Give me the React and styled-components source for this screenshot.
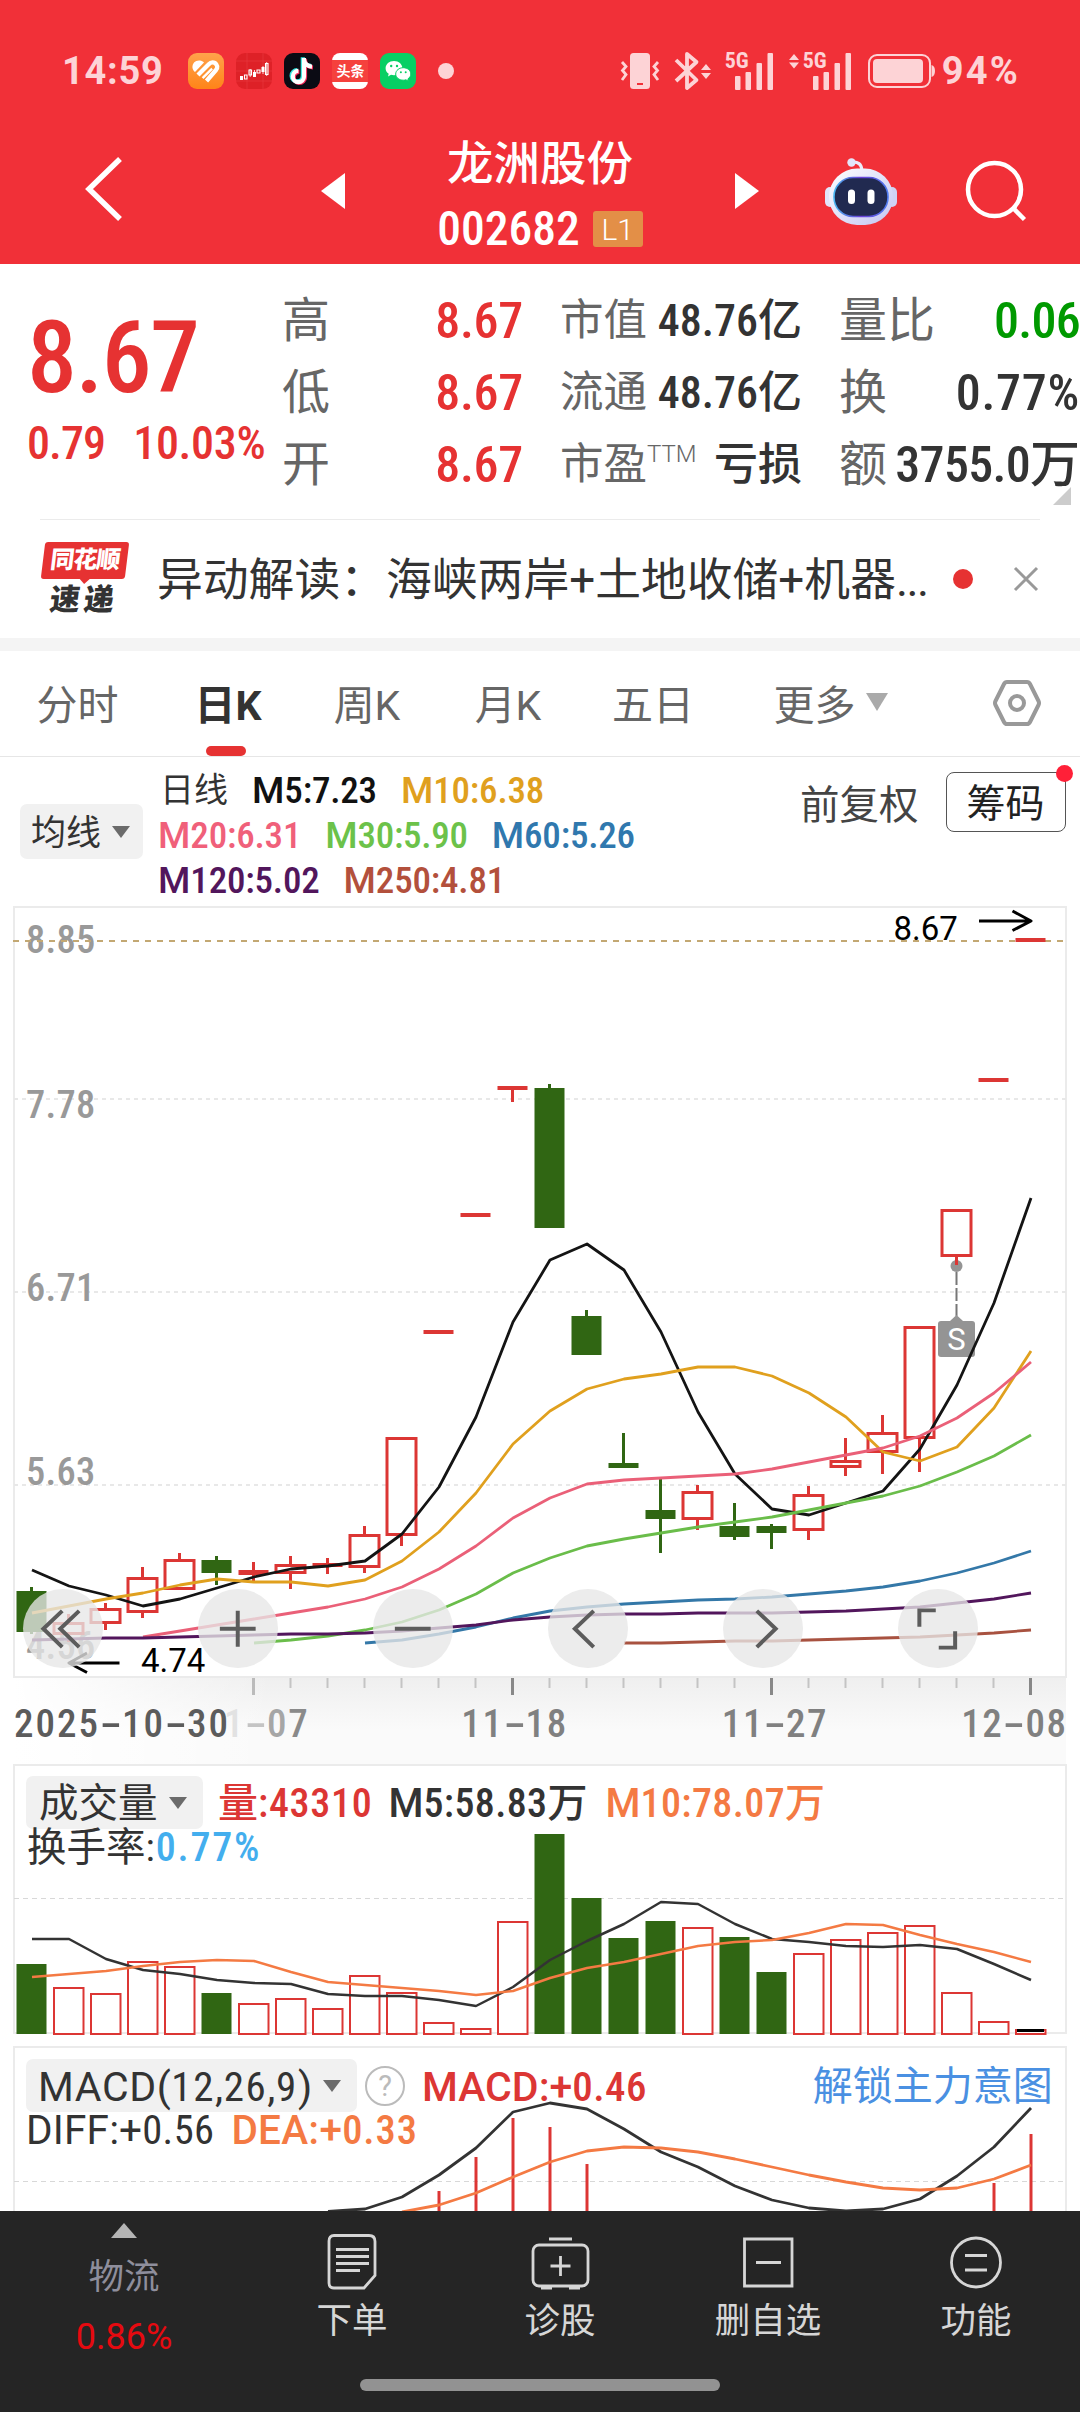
import React from 'react'
import styled, { createGlobalStyle, css } from 'styled-components'

const GlobalStyle = createGlobalStyle`
  * { box-sizing: border-box; }
  body {
    margin: 0;
    background: #fff;
    font-family: Roboto, "Noto Sans CJK SC", sans-serif;
    color: #333;
  }
  svg { display: block; overflow: visible; }
`

const digits = css`
  font-family: "Roboto Condensed", Roboto, "Noto Sans CJK SC", sans-serif;
  font-stretch: condensed;
`

const Screen = styled.div`
  width: 1080px;
  height: 2412px;
  overflow: hidden;
  display: flex;
  flex-direction: column;
`

/* ---------- shared text ---------- */

const Text = styled.span`
  display: inline-block;
  white-space: pre;
  line-height: 1;
  padding-top: 3px;
  font-size: ${p => p.$size}px;
  font-weight: ${p => p.$weight || 400};
  color: ${p => p.$color || '#333'};
  letter-spacing: ${p => p.$track || 0}px;
`
const Digits = styled.span`
  ${digits}
  letter-spacing: ${p => p.$track || 0}px;
`

// digits are set in the narrow face, words keep the normal one
const Figure = ({ children, track, ...rest }) => (
  <Text {...rest}>
    {String(children).split(/([\d.:%]+)/).map((part, i) =>
      i % 2 ? <Digits key={i} $track={track}>{part}</Digits> : part
    )}
  </Text>
)

const Caret = styled.i`
  width: 0;
  height: 0;
  border-left: ${p => p.$w / 2}px solid transparent;
  border-right: ${p => p.$w / 2}px solid transparent;
  border-top: ${p => p.$h}px solid ${p => p.$color};
  margin-left: ${p => p.$gap}px;
`

/* ---------- status bar ---------- */

const Header = styled.header`
  height: 264px;
  background: #f13038;
  flex: none;
`
const StatusBar = styled.div`
  height: 142px;
  padding: 0 60px 0 62px;
  display: flex;
  align-items: center;
  color: #fdd3d6;
`
const Apps = styled.div`
  display: flex;
  gap: 12px;
  margin-left: 25px;
`
const Dot = styled.i`
  width: ${p => p.$d}px;
  height: ${p => p.$d}px;
  border-radius: 50%;
  background: ${p => p.$color};
  flex: none;
`
const StatusRight = styled.div`
  margin-left: auto;
  display: flex;
  align-items: center;
`
const StatusText = styled.span`
  font-size: 38px;
  font-weight: 700;
  letter-spacing: ${p => p.$track}px;
`
const ToutiaoText = styled.span`
  width: 36px;
  height: 36px;
  border-radius: 8px;
  background: linear-gradient(#fff 19%, #f5413d 20%, #f5413d 80%, #fff 81%);
  color: #fff;
  font-size: 14px;
  font-weight: 700;
  line-height: 36px;
  text-align: center;
`

const HeartApp = () => (
  <svg width="36" height="36" viewBox="0 0 36 36">
    <defs>
      <linearGradient id="heart" x1="0" y1="0" x2="0" y2="1">
        <stop offset="0" stopColor="#ffa24b" />
        <stop offset="1" stopColor="#ff8418" />
      </linearGradient>
    </defs>
    <rect width="36" height="36" rx="9" fill="url(#heart)" />
    <path d="M4.500 15c-.6-5 3-8 7.500-7.500 1.500.2 3 1 4 2L7 19c-1.300-1-2.200-2.500-2.500-4z" fill="#fff" />
    <path d="M10 22L20.500 11.500q3-3.200 6.500-1.500 4 3 1 7L18.500 28" stroke="#fff" strokeWidth="4.300" fill="none" strokeLinejoin="round" />
    <path d="M14.500 25L24 15.500" stroke="#fff" strokeWidth="2.600" />
    <path d="M12.600 24.200L23.200 13.600" stroke="#ff9534" strokeWidth="1.500" />
  </svg>
)

const StockApp = () => (
  <svg width="36" height="36" viewBox="0 0 36 36">
    <rect width="36" height="36" rx="9" fill="#de2127" />
    <path d="M11 0v36M27 0v36M0 8h36M0 18h36M0 28h36" stroke="#e8383c" strokeWidth=".7" />
    <path d="M4 23h3v4H4zM17 19h3v5h-3zM25.500 14h3v5h-3z" fill="#fff" />
    <path d="M8.500 22h2.500v4H8.500zM13 17h2.500v5H13zM21 17h3v3h-3zM29.500 10.500h2.500v11h-2.500z" fill="none" stroke="#fff" strokeWidth="1.100" />
    <path d="M18.500 17v2M27 13v8M30.700 9v14M14.200 16v8" stroke="#fff" strokeWidth=".8" />
  </svg>
)

const TikTokApp = () => {
  const note = 'M20 5v18.500a5.600 5.600 0 1 1-5.600-5.600M20 7c.8 4 3.600 6.300 8 6.600'
  return (
    <svg width="36" height="36" viewBox="0 0 36 36">
      <rect width="36" height="36" rx="9" fill="#0b0b14" />
      <g fill="none" strokeWidth="4.200">
        <path d={note} stroke="#32e5e0" transform="translate(-1.200 -.8)" />
        <path d={note} stroke="#f7295a" transform="translate(1 .9)" />
        <path d={note} stroke="#fff" />
      </g>
    </svg>
  )
}

const WeChatApp = () => (
  <svg width="36" height="36" viewBox="0 0 36 36">
    <rect width="36" height="36" rx="9" fill="#07cf64" />
    <path d="M14 8c-4.800 0-8.400 3.200-8.400 7.200 0 2.300 1.200 4.300 3.100 5.600L8 23.400l3-1.600c1 .3 2 .4 3 .4 4.800 0 8.400-3 8.400-7S18.800 8 14 8z" fill="#fff" />
    <path d="M23.300 14.700c-4.200 0-7.600 2.800-7.600 6.300s3.400 6.200 7.600 6.200c.9 0 1.800-.1 2.600-.4l2.600 1.400-.6-2.300c1.800-1.200 2.900-2.900 2.900-4.900 0-3.500-3.300-6.300-7.500-6.300z" fill="#fff" stroke="#07cf64" strokeWidth="1" />
    <g fill="#07cf64">
      <circle cx="11.200" cy="13" r="1.200" /><circle cx="17" cy="13" r="1.200" />
      <circle cx="20.900" cy="19.300" r="1" /><circle cx="25.700" cy="19.300" r="1" />
    </g>
  </svg>
)

const Vibrate = () => (
  <svg width="38" height="36" viewBox="0 0 38 36" fill="none">
    <rect x="9" width="20" height="36" rx="3.500" fill="currentColor" />
    <path d="M16 31h6" stroke="#f13038" strokeWidth="2" />
    <path d="M1 9l4 4.500-3.500 4 3.500 4L1 27M37 9l-4 4.500 3.500 4-3.500 4L37 27" stroke="currentColor" strokeWidth="2.800" />
  </svg>
)

const Bluetooth = () => (
  <svg width="36" height="38" viewBox="0 0 36 38" fill="none">
    <path d="M1 8l20.500 20L12 36V2l9.500 8L1 29" stroke="currentColor" strokeWidth="3.800" strokeLinejoin="round" />
    <path d="M26 18l5-6 5 6zM26 21l5 6 5-6z" fill="currentColor" />
  </svg>
)

const SignalBox = styled.div`
  display: flex;
  align-items: flex-start;
  position: relative;
  width: 48px;
  height: 37px;
  margin-left: ${p => p.$gap}px;
`
const SignalLabel = styled.span`
  ${digits}
  font-size: 22px;
  font-weight: 700;
  line-height: 16px;
  position: absolute;
  left: 0;
  top: 0;
`
const Signal = ({ gap, arrows }) => (
  <SignalBox $gap={gap}>
    <SignalLabel>5G</SignalLabel>
    <svg width="48" height="37" viewBox="0 0 48 37" fill="currentColor">
      {arrows && <path d="M-14 7l5-6 5 6zM-14 9.500l5 6 5-6z" />}
      <rect x="10" y="23" width="5.500" height="14" rx="1" />
      <rect x="20.500" y="19" width="5.500" height="18" rx="1" />
      <rect x="31.500" y="10" width="5.500" height="27" rx="1" />
      <rect x="42.500" y="0" width="5.500" height="37" rx="1" />
    </svg>
  </SignalBox>
)

const Battery = () => (
  <svg width="67" height="34" viewBox="0 0 67 34" fill="none">
    <rect x="1" y="1" width="61" height="32" rx="8" stroke="currentColor" strokeWidth="2" />
    <rect x="5" y="5" width="50" height="24" rx="4" fill="currentColor" />
    <path d="M63.500 11q3.500 1 3.500 6t-3.500 6z" fill="currentColor" />
  </svg>
)
const Space = styled.i`
  width: ${p => p.$w}px;
  flex: none;
`

/* ---------- navigation ---------- */

const NavBar = styled.nav`
  height: 98px;
  display: grid;
  grid-template-columns: 321px 84px 270px 110px 140px 155px;
  grid-template-rows: 98px;
  align-items: center;
  color: #fff;
`
const NavCell = styled.div`
  padding-left: ${p => p.$pad || 0}px;
`
const Title = styled.div`
  display: flex;
  flex-direction: column;
  align-items: center;
  margin-top: 10px;
`
const CodeRow = styled.div`
  display: flex;
  align-items: center;
  gap: 13px;
  margin-top: 16px;
`
const Code = styled(Digits)`
  font-size: 47.500px;
  font-weight: 500;
  line-height: 50px;
`
const LevelBadge = styled.span`
  width: 50px;
  height: 36px;
  border-radius: 3px;
  background: #e38f47;
  color: #fff;
  font-size: 30px;
  font-weight: 300;
  line-height: 37px;
  text-align: center;
`

const Robot = () => (
  <svg width="72" height="67" viewBox="0 0 72 67">
    <defs>
      <linearGradient id="helmet" x1="0" y1="0" x2="1" y2="1">
        <stop offset="0" stopColor="#fff" />
        <stop offset="1" stopColor="#c3c5f2" />
      </linearGradient>
      <linearGradient id="visor" x1="0" y1="0" x2="1" y2="0">
        <stop offset="0" stopColor="#4ab6f0" />
        <stop offset=".5" stopColor="#6a3fd8" />
        <stop offset="1" stopColor="#4f7cf0" />
      </linearGradient>
    </defs>
    <path d="M27 4q9-1 10 8" stroke="#ecebfa" strokeWidth="3" fill="none" />
    <circle cx="26.500" cy="4.500" r="4.200" fill="#e3e5fa" />
    <rect x="0" y="29" width="10" height="20" rx="5" fill="#e2e4fa" />
    <rect x="62" y="29" width="10" height="20" rx="5" fill="#cfd2f4" />
    <rect x="4" y="10.500" width="64" height="56.500" rx="28" fill="url(#helmet)" />
    <rect x="9" y="19.500" width="54" height="39" rx="19" fill="#212a50" stroke="url(#visor)" strokeWidth="1.600" />
    <rect x="23" y="31.500" width="7" height="14.500" rx="3.500" fill="#fff" />
    <rect x="42.500" y="31.500" width="7" height="14.500" rx="3.500" fill="#fff" />
  </svg>
)

/* ---------- quote ---------- */

const Quote = styled.section`
  height: 255px;
  display: flex;
  padding-top: 19px;
  position: relative;
`
const PriceBlock = styled.div`
  width: 282px;
  padding-left: 27px;
  padding-top: 22px;
`
const Changes = styled.div`
  display: flex;
  gap: 28px;
  margin-top: 9px;
`
const Stats = styled.div`
  display: grid;
  grid-template-columns: 241px 242px 241px;
  grid-auto-rows: 72px;
  column-gap: 37px;
  height: 216px;
`
const Stat = styled.div`
  display: flex;
  justify-content: space-between;
  align-items: center;
`
const Sup = styled.sup`
  font-size: 24px;
  font-weight: 300;
  vertical-align: 17px;
  line-height: 0;
`
const Corner = styled.i`
  position: absolute;
  right: 9px;
  top: 223px;
  border-left: 18px solid transparent;
  border-bottom: 18px solid #ccc;
`

const RED = '#e63232'
const stats = [
  ['高', '8.67', '市值', '48.76亿', '量比', '0.06'],
  ['低', '8.67', '流通', '48.76亿', '换', '0.77%'],
  ['开', '8.67', '市盈', '亏损', '额', '3755.0万'],
]

/* ---------- news strip ---------- */

const News = styled.section`
  height: 119px;
  margin: 0 40px;
  border-top: 1px solid #ebebeb;
  display: flex;
  align-items: center;
`
const Logo = styled.div`
  width: 90px;
  height: 74px;
  margin-left: 1px;
`
const LogoTop = styled.div`
  height: 37px;
  width: 84px;
  margin-left: 2px;
  border-radius: 3px;
  background: ${RED};
  transform: skewX(-7deg);
  color: #fff;
  font-size: 24px;
  font-weight: 900;
  line-height: 36px;
  text-align: center;
  letter-spacing: -1px;
  position: relative;
  &::after {
    content: '';
    position: absolute;
    left: 38px;
    top: 36px;
    border: 6px solid transparent;
    border-top-color: ${RED};
    border-bottom: 0;
  }
`
const LogoBottom = styled.div`
  margin: 6px 0 0 9px;
  font-size: 30px;
  font-weight: 900;
  line-height: 30px;
  letter-spacing: 4px;
  transform: skewX(-7deg);
`
const Headline = styled(Text)`
  padding-top: 5px;
`
const Ellipsis = styled.span`
  letter-spacing: -1.500px;
`
const Band = styled.div`
  height: 13px;
  background: #f4f4f4;
`

/* ---------- period tabs ---------- */

const Tabs = styled.div`
  height: 107px;
  border-bottom: 1px solid #e6e6e6;
  display: grid;
  grid-template-columns: 155px 146px 132px 150px 140px 215px 158px;
`
const Tab = styled.div`
  display: flex;
  align-items: center;
  justify-content: center;
  position: relative;
  padding-bottom: ${p => (p.$icon ? 0 : 3)}px;
  font-size: 41px;
  color: ${p => (p.$active ? '#333' : '#666')};
  font-weight: ${p => (p.$active ? 700 : 400)};
  &::after {
    content: '';
    display: ${p => (p.$active ? 'block' : 'none')};
    position: absolute;
    left: 51px;
    bottom: 0;
    width: 40px;
    height: 10px;
    border-radius: 5px;
    background: ${RED};
  }
`

/* ---------- indicator legend ---------- */

const Legend = styled.div`
  height: 148px;
  display: flex;
`
const Picker = styled.div`
  display: flex;
  align-items: center;
  background: #f1f1f1;
  border-radius: 7px;
  width: ${p => p.$w}px;
  height: ${p => p.$h}px;
  padding: 0 ${p => p.$right || 0}px 0 ${p => p.$pad}px;
  justify-content: ${p => (p.$right ? 'space-between' : 'flex-start')};
  flex: none;
`
const LegendPicker = styled.div`
  padding: 47px 0 0 20px;
  width: 158px;
`
const LegendRows = styled.div`
  padding-top: 9px;
  width: 642px;
`
const LegendRow = styled.div`
  height: 45px;
  display: flex;
  align-items: center;
  gap: 24px;
  padding-left: ${p => p.$pad || 0}px;
`
const ChipsButton = styled.div`
  width: 120px;
  height: 60px;
  margin: 15px 0 0 27px;
  padding-top: 1px;
  border: 1.500px solid #555;
  border-radius: 8px;
  display: flex;
  align-items: center;
  justify-content: center;
  position: relative;
`
const ChipsDot = styled(Dot)`
  position: absolute;
  right: -8px;
  top: -8px;
`
const Adjust = styled.div`
  padding-top: 26px;
`

/* ---------- charts ---------- */

const xs = i => 32 + i * 37
const points = (start, ys) => ys.map((y, i) => `${xs(start + i)},${y}`).join(' ')

// [kind, body top, body bottom, wick top, wick bottom]
const candles = [
  ['g', 1591, 1632, 1587, 1634], ['r', 1622, 1635, 1614, 1642], ['r', 1608, 1624, 1603, 1630],
  ['r', 1577, 1613, 1567, 1618], ['r', 1559, 1590, 1553, 1590], ['g', 1560, 1573, 1556, 1585],
  ['r', 1570, 1575, 1562, 1581], ['r', 1564, 1574, 1556, 1589], ['r', 1563, 1567, 1558, 1574],
  ['r', 1534, 1568, 1526, 1573], ['r', 1437, 1536, 1437, 1546], ['r', 1330, 1334, 1330, 1334],
  ['r', 1213, 1217, 1213, 1217], ['r', 1086, 1090, 1086, 1102], ['g', 1088, 1228, 1084, 1228],
  ['g', 1316, 1355, 1310, 1355], ['g', 1463, 1468, 1433, 1468], ['g', 1510, 1519, 1479, 1553],
  ['r', 1491, 1520, 1485, 1530], ['g', 1526, 1537, 1503, 1540], ['g', 1526, 1533, 1524, 1549],
  ['r', 1494, 1531, 1486, 1540], ['r', 1460, 1468, 1438, 1476], ['r', 1432, 1453, 1415, 1474],
  ['r', 1326, 1439, 1326, 1472], ['r', 1209, 1257, 1209, 1265], ['r', 1078, 1082, 1078, 1082],
  ['r', 938, 942, 938, 942],
]

const averages = [
  ['#e0a01e', 0, [1613, 1606, 1599, 1593, 1585, 1579, 1582, 1582, 1586, 1580, 1561, 1532, 1493, 1444, 1411, 1389, 1379, 1374, 1367, 1367, 1376, 1393, 1417, 1452, 1461, 1447, 1408, 1351]],
  ['#ea6078', 3, [1637, 1631, 1625, 1619, 1613, 1607, 1599, 1587, 1569, 1546, 1518, 1498, 1484, 1480, 1478, 1476, 1474, 1469, 1462, 1455, 1448, 1436, 1418, 1393, 1362]],
  ['#6abd4a', 6, [1643, 1640, 1636, 1630, 1622, 1610, 1594, 1573, 1558, 1546, 1539, 1533, 1527, 1522, 1517, 1510, 1503, 1496, 1486, 1472, 1456, 1435]],
  ['#3478a8', 9, [1643, 1640, 1634, 1627, 1618, 1611, 1607, 1604, 1602, 1600, 1599, 1597, 1594, 1591, 1587, 1581, 1573, 1563, 1551]],
  ['#52165c', 0, [1640, 1639, 1638, 1638, 1637, 1636, 1635, 1634, 1634, 1633, 1631, 1628, 1625, 1620, 1617, 1615, 1614, 1614, 1613, 1613, 1613, 1612, 1611, 1609, 1607, 1603, 1599, 1593]],
  ['#a85240', 16, [1643, 1643, 1642, 1641, 1641, 1640, 1639, 1638, 1637, 1635, 1633, 1630]],
]
const m5 = [1570, 1586, 1595, 1606, 1599, 1588, 1577, 1569, 1566, 1561, 1534, 1487, 1417, 1322, 1260, 1244, 1270, 1332, 1412, 1474, 1509, 1515, 1503, 1491, 1449, 1385, 1303, 1198]

const GREEN = '#306613'
const CANDLE_RED = '#dc3634'

const Candle = ({ i, c: [kind, top, bottom, high, low] }) => {
  const x = xs(i) - 0.5
  if (kind === 'g') {
    return (
      <g fill={GREEN}>
        <rect x={x - 1.5} y={high} width="3" height={low - high} />
        <rect x={x - 15} y={top} width="30" height={bottom - top} />
      </g>
    )
  }
  return (
    <g fill={CANDLE_RED}>
      <rect x={x - 1.5} y={high} width="3" height={top - high} />
      <rect x={x - 1.5} y={bottom} width="3" height={low - bottom} />
      {bottom - top < 6
        ? <rect x={x - 15} y={top} width="30" height={bottom - top} />
        : <rect x={x - 14.5} y={top + 1.5} width="29" height={bottom - top - 3} fill="#fff" stroke={CANDLE_RED} strokeWidth="3" />}
    </g>
  )
}

const Panel = styled.div`
  height: ${p => p.$h}px;
  padding-top: ${p => p.$top || 0}px;
  position: relative;
  flex: none;
  overflow: ${p => (p.$clip ? 'hidden' : 'visible')};
`
const Layer = styled.svg`
  position: absolute;
  left: 0;
  top: 0;
`
const Tools = styled.div`
  position: absolute;
  left: 23px;
  top: 683.500px;
  display: flex;
  gap: 95.500px;
`
const Tool = styled.div`
  width: 79.500px;
  height: 79.500px;
  border-radius: 50%;
  background: rgba(231, 231, 231, .78);
  svg { width: 100%; height: 100%; }
`
const tools = [
  'M39.500 22L20.500 40l19 18.500M56.500 22L37.500 40l19 18.500',
  'M22 40h36M40 22v36',
  'M22 40h36',
  'M46 22L27 40l19 18.500',
  'M34 22l19 18-19 18.500',
  'M38 21.500H21.500V38M41 59h16.500V42.500',
]

const scale = [['8.85', 953], ['7.78', 1118], ['6.71', 1301], ['5.63', 1485], ['4.56', 1659]]

const ScaleText = styled.text`
  ${digits}
  font-size: 38.500px;
  font-weight: 500;
  letter-spacing: .3px;
  fill: #999;
`
const NoteText = styled.text`
  font-family: Roboto, sans-serif;
  font-size: ${p => p.$size || 32}px;
`

const PriceChart = () => (
  <Panel $h={773}>
    <Layer width="1080" height="773" viewBox="0 905 1080 773">
      <rect x="14" y="907" width="1052" height="770" fill="none" stroke="#ebebeb" strokeWidth="2" />
      {[1099, 1292, 1485].map(y => (
        <path key={y} d={`M14 ${y}H1066`} stroke="#e8e8e8" strokeWidth="2" strokeDasharray="4 4" />
      ))}
      {scale.map(([t, y]) => <ScaleText key={t} x="26" y={y}>{t}</ScaleText>)}
      <path d="M13 941H1066" stroke="#c3a873" strokeWidth="2" strokeDasharray="6 6" />
      {candles.map((c, i) => <Candle key={i} i={i} c={c} />)}
      <circle cx="956.500" cy="1266" r="6" fill="#949494" />
      <path d="M956.500 1259v6" stroke={CANDLE_RED} strokeWidth="3" />
      <path d="M956.500 1272v44" stroke="#777" strokeWidth="2" strokeDasharray="13 3" />
      <path d="M950 1321l6.500-6 6.500 6z" fill="#949494" />
      <rect x="938" y="1321" width="37" height="36" rx="3" fill="#949494" />
      <NoteText x="956.500" y="1350" $size={31} textAnchor="middle" fill="#fff">S</NoteText>
      <g fill="none" strokeWidth="2.800" strokeLinejoin="round">
        <polyline points={points(0, m5)} stroke="#141414" />
        {averages.map(([color, start, ys]) => (
          <polyline key={color} points={points(start, ys)} stroke={color} />
        ))}
        <path d="M979 921h51M1012.500 911l18.500 10-18.500 9.500M119.500 1663H70M87 1653l-18 10 18 9.500" stroke="#000" strokeWidth="3" />
      </g>
      <NoteText x="893.500" y="940" $size={33}>8.67</NoteText>
      <NoteText x="141" y="1671.500" $size={33}>4.74</NoteText>
    </Layer>
    <Tools>
      {tools.map(d => (
        <Tool key={d}>
          <svg viewBox="0 0 80 80">
            <path d={d} fill="none" stroke="#5c5c5c" strokeWidth="4" />
          </svg>
        </Tool>
      ))}
    </Tools>
  </Panel>
)

const Axis = styled.div`
  height: 86px;
  margin: 0 14px;
  position: relative;
  flex: none;
  background:
    linear-gradient(90deg, #fff 0, rgba(255, 255, 255, 0) 260px),
    linear-gradient(#efefef, #fafafa 60%);
`
const Dates = styled.div`
  position: absolute;
  top: 26px;
  left: 0;
  right: 0;
  display: flex;
  align-items: center;
  ${digits}
  font-size: 39px;
  line-height: 40px;
  font-weight: 500;
  color: #808080;
`
const Stamp = styled.span`
  margin-left: ${p => p.$left}px;
  flex: none;
  white-space: nowrap;
  display: inline-flex;
  letter-spacing: ${p => (p.$first ? 2 : 1.6)}px;
  color: ${p => (p.$first ? '#5c5c5c' : '#808080')};
`
const fade = ['#e2e2e2', '#c4c4c4', '#a6a6a6', '#8a8a8a']
const Char = styled.span`
  ${p => p.$dash && css`
    width: 22px;
    text-align: center;
    letter-spacing: 0;
    transform: scaleX(1.900);
  `}
  ${p => p.$tint && css`color: ${p.$tint};`}
`
const DateLabel = ({ children, faded, ...rest }) => (
  <Stamp {...rest}>
    {children.split('').map((s, i) => (
      <Char key={i} $dash={s === '-'} $tint={faded && fade[i]}>{s}</Char>
    ))}
  </Stamp>
)

const TimeAxis = () => (
  <Axis>
    <Layer width="1052" height="86" viewBox="14 1678 1052 86">
      {Array.from({ length: 22 }, (_, k) => k + 6).map(i => (
        <path
          key={i}
          d={`M${xs(i) - 0.5} 1678V${(i - 6) % 7 ? 1688 : 1695}`}
          stroke={(i - 6) % 7 ? '#c4c4c4' : i === 6 ? '#bbb' : '#888'}
          strokeWidth={(i - 6) % 7 ? 2 : 3}
        />
      ))}
    </Layer>
    <Dates>
      <DateLabel $left={0} $first>2025-10-30</DateLabel>
      <DateLabel $left={-6} faded>1-07</DateLabel>
      <DateLabel $left={152}>11-18</DateLabel>
      <DateLabel $left={154}>11-27</DateLabel>
      <DateLabel $left={133}>12-08</DateLabel>
    </Dates>
  </Axis>
)

// [kind, top]
const volumes = [
  ['g', 1964], ['r', 1987], ['r', 1993], ['r', 1961], ['r', 1966], ['g', 1993], ['r', 2003],
  ['r', 1998], ['r', 2008], ['r', 1975], ['r', 1992], ['r', 2022], ['r', 2028], ['r', 1921],
  ['g', 1834], ['g', 1898], ['g', 1938], ['g', 1921], ['r', 1927], ['g', 1937], ['g', 1972],
  ['r', 1953], ['r', 1939], ['r', 1932], ['r', 1925], ['r', 1992], ['r', 2021], ['r', 2029],
]
const vol5 = [1939, 1939, 1959, 1970, 1974, 1980, 1983, 1984, 1994, 1996, 1996, 2000, 2006, 1987, 1960, 1941, 1924, 1902, 1904, 1924, 1939, 1942, 1946, 1947, 1945, 1949, 1964, 1980]
const vol10 = [1977, 1974, 1971, 1966, 1962, 1960, 1961, 1972, 1982, 1985, 1988, 1991, 1995, 1991, 1978, 1968, 1962, 1954, 1946, 1942, 1940, 1933, 1924, 1925, 1935, 1944, 1952, 1962]

const PanelRow = styled.div`
  position: relative;
  display: flex;
  align-items: center;
  height: ${p => p.$h}px;
  padding-left: ${p => p.$pad}px;
  gap: ${p => p.$gap || 0}px;
`
const ORANGE = '#f47a43'

const VolumePanel = () => (
  <Panel $h={282} $top={12}>
    <Layer width="1080" height="282" viewBox="0 1764 1080 282">
      <rect x="14" y="1765" width="1052" height="268" fill="#fff" stroke="#ebebeb" strokeWidth="2" />
      <path d="M14 1898.500H1066" stroke="#d8d8d8" strokeWidth="1" strokeDasharray="5 4" />
      {volumes.map(([kind, top], i) => kind === 'g'
        ? <rect key={i} x={xs(i) - 15.5} y={top} width="30" height={2034 - top} fill={GREEN} />
        : <rect key={i} x={xs(i) - 15} y={top + 1} width="29.500" height={2033 - top} fill="#fff" stroke={CANDLE_RED} strokeWidth="2" />
      )}
      <path d="M1017 2030.500h27" stroke="#000" strokeWidth="3" />
      <g fill="none" strokeWidth="2.500" strokeLinejoin="round">
        <polyline points={points(0, vol5)} stroke="#333" />
        <polyline points={points(0, vol10)} stroke={ORANGE} />
      </g>
    </Layer>
    <PanelRow $h={53} $pad={26}>
      <Picker $w={177} $h={53} $pad={13}>
        <Text $size={39.5}>成交量</Text>
        <Caret $w={18} $h={12} $color="#6b6b6b" $gap={11} />
      </Picker>
      <Space $w={15} />
      <Figure $size={40} $weight={500} $color={CANDLE_RED} track={0.7}>量:43310</Figure>
      <Space $w={16} />
      <Figure $size={40} $weight={500} track={0.4}>M5:58.83万</Figure>
      <Space $w={18} />
      <Figure $size={40} $weight={500} $color={ORANGE} track={0.4}>M10:78.07万</Figure>
    </PanelRow>
    <PanelRow $h={34} $pad={27}>
      <Figure $size={39.5} track={1}>换手率:</Figure>
      <Figure $size={40} $weight={500} $color="#43aeee" track={1.8}>0.77%</Figure>
    </PanelRow>
  </Panel>
)

const diff = [2211.5, 2209, 2197, 2175, 2148, 2112, 2103, 2109, 2129, 2152, 2167, 2186, 2200, 2208, 2211, 2209, 2199, 2176, 2147, 2108]
const dea = [2212, 2205, 2193, 2177, 2162, 2151, 2147, 2148, 2152, 2159, 2167, 2175, 2182, 2188, 2190, 2188, 2179, 2165]
const macd = [[11, 2191], [12, 2157], [13, 2118], [14, 2127], [15, 2164], [26, 2183], [27, 2134]]

const Help = styled.span`
  width: 40px;
  height: 40px;
  border: 2.500px solid #bbb;
  border-radius: 50%;
  color: #bbb;
  font-size: 29px;
  line-height: 36px;
  text-align: center;
`

const MacdPanel = () => (
  <Panel $h={165} $top={13} $clip>
    <Layer width="1080" height="165" viewBox="0 2046 1080 165">
      <path d="M14 2220V2047H1066V2220" fill="none" stroke="#ebebeb" strokeWidth="2" />
      <path d="M14 2181.500H1066" stroke="#d8d8d8" strokeWidth="1" strokeDasharray="5 4" />
      {macd.map(([i, y]) => <path key={i} d={`M${xs(i)} ${y}V2212`} stroke={CANDLE_RED} strokeWidth="3" />)}
      <g fill="none" strokeWidth="2.800" strokeLinejoin="round">
        <polyline points={points(8, diff)} stroke="#333" />
        <polyline points={points(10, dea)} stroke={ORANGE} />
      </g>
    </Layer>
    <PanelRow $h={53} $pad={26}>
      <Picker $w={331} $h={53} $pad={12} $right={16}>
        <Figure $size={41} $track={0.6} track={1.6}>MACD(12,26,9)</Figure>
        <Caret $w={18} $h={12} $color="#6b6b6b" $gap={0} />
      </Picker>
      <Space $w={8} />
      <Help>?</Help>
      <Space $w={17} />
      <Figure $size={41} $color={CANDLE_RED} $weight={500} track={0.4}>MACD:+0.46</Figure>
      <Space $w={166} />
      <Text $size={40} $color="#4a90e2">解锁主力意图</Text>
    </PanelRow>
    <PanelRow $h={34} $pad={26} $gap={17}>
      <Figure $size={40.5} $track={0.2} track={0.4}>DIFF:+0.56</Figure>
      <Figure $size={40.5} $track={0.2} $color={ORANGE} $weight={500} track={0.9}>DEA:+0.33</Figure>
    </PanelRow>
  </Panel>
)

/* ---------- bottom bar ---------- */

const Footer = styled.footer`
  height: 201px;
  background: #252525;
  display: flex;
  flex-direction: column;
  align-items: center;
  justify-content: space-between;
  padding-bottom: 21px;
`
const Actions = styled.div`
  width: 1080px;
  display: grid;
  grid-template-columns: 248px 208px 208px 208px 208px;
`
const Action = styled.div`
  display: flex;
  flex-direction: column;
  align-items: center;
  padding-top: 22px;
  svg { width: 60px; height: 58px; margin-bottom: 10px; }
`
const Sector = styled.div`
  display: flex;
  flex-direction: column;
  align-items: center;
  padding-top: 12px;
`
const SectorName = styled(Text)`
  margin-top: 19px;
`
const SectorChange = styled(Text)`
  margin-top: 20px;
`
const UpMark = styled.i`
  border: 13px solid transparent;
  border-top: 0;
  border-bottom: 15px solid #b5b5b5;
`
const HomeBar = styled.div`
  width: 360px;
  height: 12px;
  border-radius: 6px;
  background: #929292;
`

const actions = [
  ['下单', <path d="M12 2.500h35q6 0 6 6v34L42 55H12q-5 0-5-5V8q0-5.500 5-5.500zM14 16.500h33M14 23.500h33M14 30.500h33M14 37.500h24" />],
  ['诊股', <g><rect x="3" y="12" width="55" height="41" rx="6" /><path d="M19 6h23M30.500 23v20M20.500 33h20M11 55h11M39 55h11" /></g>],
  ['删自选', <path d="M6.500 6h47.500v47h-47.500zM18 29.500h25" />],
  ['功能', <g><circle cx="30" cy="29.500" r="24.500" /><path d="M19 22.500h22M19 37h22" /></g>],
]

export default function App() {
  return (
    <Screen>
      <GlobalStyle />
      <Header>
        <StatusBar>
          <StatusText $track={0.7}>14:59</StatusText>
          <Apps>
            <HeartApp />
            <StockApp />
            <TikTokApp />
            <ToutiaoText>头条</ToutiaoText>
            <WeChatApp />
          </Apps>
          <Space $w={22} />
          <Dot $d={16} $color="#fdd3d6" />
          <StatusRight>
            <Vibrate />
            <Space $w={16} />
            <Bluetooth />
            <Signal gap={14} />
            <Signal gap={30} arrows />
            <Space $w={17} />
            <Battery />
            <Space $w={7} />
            <StatusText $track={2.2}>94%</StatusText>
          </StatusRight>
        </StatusBar>
        <NavBar>
          <NavCell $pad={84}>
            <svg width="38" height="66" viewBox="0 0 38 66">
              <path d="M36 1L5 31l31 30" fill="none" stroke="#fff" strokeWidth="5.500" />
            </svg>
          </NavCell>
          <NavCell>
            <svg width="24" height="36"><path d="M24 0v36L0 18z" fill="#fff" /></svg>
          </NavCell>
          <Title>
            <Text $size={46.5} $weight={500} $color="#fff">龙洲股份</Text>
            <CodeRow>
              <Code>002682</Code>
              <LevelBadge>L1</LevelBadge>
            </CodeRow>
          </Title>
          <NavCell $pad={60}>
            <svg width="24" height="36"><path d="M0 0v36l24-18z" fill="#fff" /></svg>
          </NavCell>
          <NavCell $pad={40}><Robot /></NavCell>
          <NavCell $pad={41}>
            <svg width="62" height="60" viewBox="0 0 62 60">
              <circle cx="28.500" cy="28.500" r="26.500" fill="none" stroke="#fff" strokeWidth="4.500" />
              <path d="M47 47l11.500 11.500" stroke="#fff" strokeWidth="4.500" />
            </svg>
          </NavCell>
        </NavBar>
      </Header>

      <Quote>
        <PriceBlock>
          <Figure $size={100} $weight={500} $color={RED} track={-1.6}>8.67</Figure>
          <Changes>
            <Figure $size={46} $weight={500} $color={RED} track={-0.9}>0.79</Figure>
            <Figure $size={46} $weight={500} $color={RED} track={-0.3}>10.03%</Figure>
          </Changes>
        </PriceBlock>
        <Stats>
          {stats.map(([a, av, b, bv, c, cv], i) => (
            <React.Fragment key={a}>
              <Stat>
                <Text $size={48} $color="#666">{a}</Text>
                <Figure $size={50} $weight={500} $color={RED} track={-0.3}>{av}</Figure>
              </Stat>
              <Stat>
                <Text $size={43.5} $color="#666">{b}{i === 2 && <Sup>TTM</Sup>}</Text>
                <Figure $size={44} $weight={500}>{bv}</Figure>
              </Stat>
              <Stat>
                <Text $size={48} $color="#666">{c}</Text>
                <Figure $size={50} $weight={500} $color={i === 0 ? '#090' : '#333'} track={i === 1 ? 0.7 : -0.7}>{cv}</Figure>
              </Stat>
            </React.Fragment>
          ))}
        </Stats>
        <Corner />
      </Quote>

      <News>
        <Logo>
          <LogoTop>同花顺</LogoTop>
          <LogoBottom>速递</LogoBottom>
        </Logo>
        <Space $w={26} />
        <Headline $size={45.8}>异动解读：海峡两岸+土地收储+机器<Ellipsis>...</Ellipsis></Headline>
        <Space $w={25} />
        <Dot $d={20} $color={RED} />
        <Space $w={41} />
        <svg width="24" height="24"><path d="M1 1l22 22M23 1L1 23" stroke="#999" strokeWidth="3" /></svg>
      </News>
      <Band />

      <Tabs>
        <Tab>分时</Tab>
        <Tab $active>日K</Tab>
        <Tab>周K</Tab>
        <Tab>月K</Tab>
        <Tab>五日</Tab>
        <Tab>更多<Caret $w={22} $h={18} $color="#aaa" $gap={10} /></Tab>
        <Tab $icon>
          <svg width="48" height="46" viewBox="0 0 48 46" fill="none" stroke="#999" strokeWidth="4">
            <path d="M14 2h20q2 0 3 2l8.500 17q1 2 0 4L37 42q-1 2-3 2H14q-2 0-3-2L2.500 25q-1-2 0-4L11 4q1-2 3-2z" />
            <circle cx="24" cy="23" r="7" />
          </svg>
        </Tab>
      </Tabs>

      <Legend>
        <LegendPicker>
          <Picker $w={123} $h={55} $pad={11}>
            <Text $size={35}>均线</Text>
            <Caret $w={18} $h={12} $color="#6b6b6b" $gap={11} />
          </Picker>
        </LegendPicker>
        <LegendRows>
          <LegendRow $pad={2}>
            <Text $size={34}>日线</Text>
            <Figure $size={37} $weight={500} $color="#111" track={-0.2}>M5:7.23</Figure>
            <Figure $size={37} $weight={500} $color="#e0a01e" track={-0.2}>M10:6.38</Figure>
          </LegendRow>
          <LegendRow>
            <Figure $size={37} $weight={500} $color="#f0607a" track={-0.2}>M20:6.31</Figure>
            <Figure $size={37} $weight={500} $color="#6cc24a" track={-0.3}>M30:5.90</Figure>
            <Figure $size={37} $weight={500} $color="#3078ae" track={-0.2}>M60:5.26</Figure>
          </LegendRow>
          <LegendRow>
            <Figure $size={37} $weight={500} $color="#52165c" track={-0.2}>M120:5.02</Figure>
            <Figure $size={37} $weight={500} $color="#b3503c" track={-0.2}>M250:4.81</Figure>
          </LegendRow>
        </LegendRows>
        <Adjust><Text $size={39.5} $color="#444">前复权</Text></Adjust>
        <ChipsButton>
          <Text $size={39} $color="#222">筹码</Text>
          <ChipsDot $d={17} $color="#ff2038" />
        </ChipsButton>
      </Legend>

      <PriceChart />
      <TimeAxis />
      <VolumePanel />
      <MacdPanel />

      <Footer>
        <Actions>
          <Sector>
            <UpMark />
            <SectorName $size={35.5} $color="#8e8e9c">物流</SectorName>
            <SectorChange $size={36} $color="#e60a10">0.86%</SectorChange>
          </Sector>
          {actions.map(([name, icon]) => (
            <Action key={name}>
              <svg viewBox="0 0 60 58" fill="none" stroke="#d6d6d6" strokeWidth="2.800">{icon}</svg>
              <Text $size={35.5} $color="#d6d6d6">{name}</Text>
            </Action>
          ))}
        </Actions>
        <HomeBar />
      </Footer>
    </Screen>
  )
}
